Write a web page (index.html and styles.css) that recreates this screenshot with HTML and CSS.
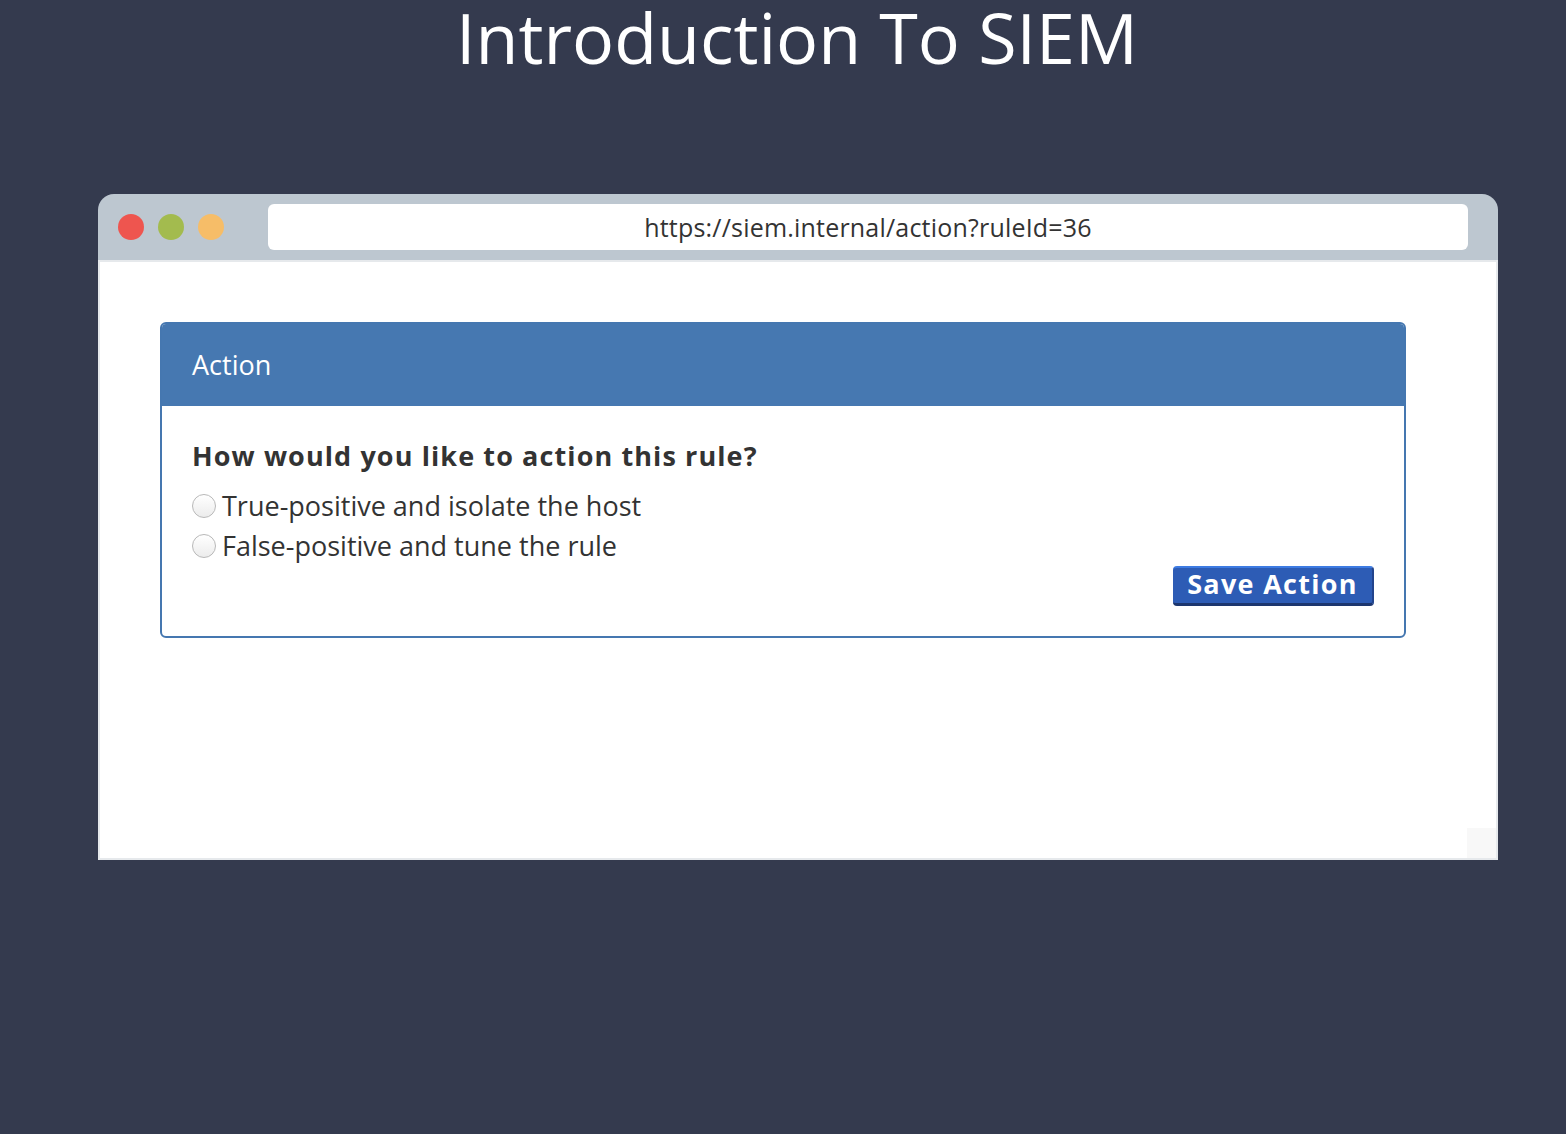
FILE: index.html
```html
<!DOCTYPE html>
<html>
<head>
<meta charset="utf-8">
<link rel="stylesheet" href="styles.css">
</head>
<body>
<h1 class="title">Introduction To SIEM</h1>
<div class="window">
  <div class="titlebar">
    <div class="dots">
      <span class="dot red"></span>
      <span class="dot green"></span>
      <span class="dot yellow"></span>
    </div>
    <div class="url">https://siem.internal/action?ruleId=36</div>
  </div>
  <div class="viewport">
    <div class="card">
      <div class="card-header">Action</div>
      <div class="card-body">
        <div class="question">How would you like to action this rule?</div>
        <label class="option"><span class="radio"></span>True-positive and isolate the host</label>
        <label class="option"><span class="radio"></span>False-positive and tune the rule</label>
        <div class="actions"><button class="save">Save Action</button></div>
      </div>
    </div>
    <div class="corner"></div>
  </div>
</div>
</body>
</html>
```
FILE: styles.css
```css
html, body {
  margin: 0;
  padding: 0;
}
body {
  background: #343a4e;
  font-family: "Open Sans", "Noto Sans", sans-serif;
  width: 1566px;
  height: 1134px;
  overflow: hidden;
}
.title {
  margin: 0;
  height: 194px;
  text-align: center;
  color: #ffffff;
  font-weight: 400;
  font-size: 70px;
  line-height: 74px;
  padding-left: 28px;
  box-sizing: border-box;
}
.window {
  margin-left: 98px;
  width: 1400px;
}
.titlebar {
  height: 66px;
  background: #bdc7d0;
  border-radius: 16px 16px 0 0;
  display: flex;
  align-items: flex-start;
  box-sizing: border-box;
  padding: 10px 30px 0 20px;
}
.dots {
  display: flex;
  gap: 14px;
  margin-top: 10px;
  width: 150px;
}
.dot {
  width: 26px;
  height: 26px;
  border-radius: 50%;
  display: block;
}
.red { background: #ee554f; }
.green { background: #a3bb4e; }
.yellow { background: #f6bd68; }
.url {
  flex: 1;
  height: 46px;
  background: #ffffff;
  border-radius: 6px;
  text-align: center;
  font-size: 25px;
  line-height: 47px;
  letter-spacing: 0.2px;
  color: #333333;
}
.viewport {
  position: relative;
  height: 600px;
  background: #ffffff;
  border: 2px solid #e6e9ec;
  box-sizing: border-box;
  padding: 60px 90px 0 60px;
}
.card {
  border: 2px solid #4577b0;
  border-radius: 6px;
  overflow: hidden;
}
.card-header {
  height: 82px;
  background: #4678b1;
  color: #ffffff;
  font-size: 27px;
  font-weight: 500;
  line-height: 82px;
  padding-left: 30px;
}
.card-body {
  padding: 30px 30px 30px 30px;
  color: #333333;
}
.question {
  font-size: 27px;
  font-weight: 700;
  line-height: 40px;
  letter-spacing: 1.1px;
  margin-bottom: 10px;
}
.option {
  display: flex;
  align-items: center;
  font-size: 27px;
  line-height: 40px;
}
.radio {
  width: 22px;
  height: 22px;
  border: 1px solid #b8b8b8;
  border-radius: 50%;
  background: linear-gradient(#ffffff, #ececec);
  margin-right: 6px;
  flex: none;
}
.actions {
  display: flex;
  justify-content: flex-end;
}
.save {
  font-family: inherit;
  font-size: 27px;
  font-weight: 700;
  letter-spacing: 1.3px;
  color: #ffffff;
  background: #2d5cb5;
  border: none;
  border-top: 2px solid #3d7be2;
  border-bottom: 3px solid #1c366e;
  border-right: 2px solid #22448c;
  border-radius: 4px;
  height: 40px;
  width: 201px;
  padding: 0 0 4px 0;
  line-height: 31px;
}
.corner {
  position: absolute;
  right: 0;
  bottom: 0;
  width: 29px;
  height: 30px;
  background: #f8f8f8;
}
```
